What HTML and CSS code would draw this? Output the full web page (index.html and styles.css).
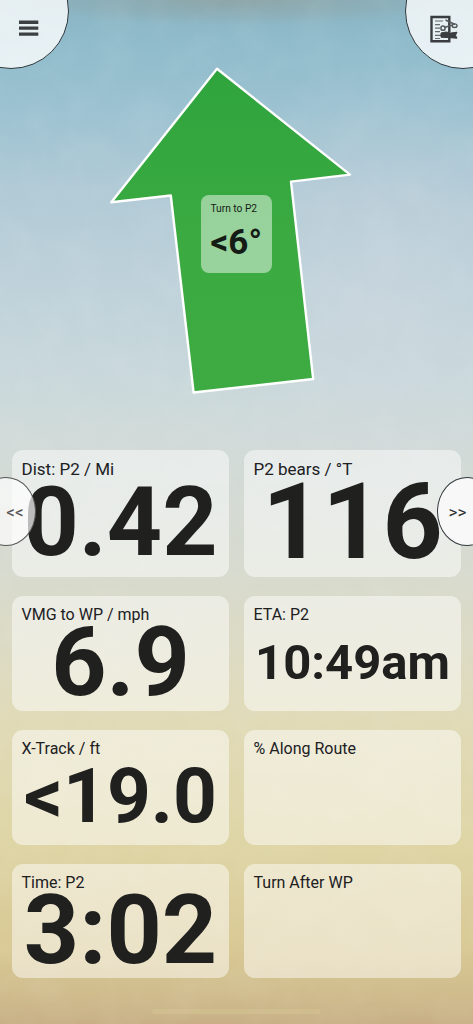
FILE: index.html
```
<!DOCTYPE html>
<html lang="en">
<head>
<meta charset="utf-8">
<title>Navigation</title>
<link rel="stylesheet" href="styles.css">
</head>
<body>
<div class="screen">
  <svg class="texture" width="473" height="1024" aria-hidden="true">
    <filter id="grain" x="0" y="0" width="100%" height="100%" color-interpolation-filters="sRGB">
      <feTurbulence type="fractalNoise" baseFrequency="0.03" numOctaves="4" seed="4"/>
      <feColorMatrix values="0 0 0 0 1  0 0 0 0 1  0 0 0 0 1  1.6 0 0 0 -0.6"/>
    </filter>
    <rect width="473" height="1024" filter="url(#grain)"/>
  </svg>

  <section class="heading">
    <svg class="arrow" viewBox="0 0 473 450" width="473" height="450">
      <defs><linearGradient id="green" x1="0" y1="0" x2="0" y2="1"><stop offset="0" stop-color="#2fa43d"/><stop offset=".5" stop-color="#3aaa41"/><stop offset="1" stop-color="#3dab42"/></linearGradient></defs>
      <path d="M217 68.7 350 174.6 291 181.6 313.2 379 193.6 392.5 170.8 195.5 111.3 202.3Z" fill="url(#green)" stroke="#fff" stroke-width="2.4" stroke-linejoin="round"/>
    </svg>
    <div class="turn"><span class="turn-label">Turn to P2</span><b class="turn-value">&lt;6°</b></div>
  </section>

  <main class="grid">
    <article class="card tall"><h2 class="label">Dist: P2 / Mi</h2><b class="value s96">0.42</b></article>
    <article class="card tall"><h2 class="label">P2 bears / °T</h2><b class="value s105">116</b></article>
    <article class="card"><h2 class="label">VMG to WP / mph</h2><b class="value s96">6.9</b></article>
    <article class="card"><h2 class="label">ETA: P2</h2><b class="value s49">10:49am</b></article>
    <article class="card"><h2 class="label">X-Track / ft</h2><b class="value s76">&lt;19.0</b></article>
    <article class="card"><h2 class="label">% Along Route</h2></article>
    <article class="card"><h2 class="label">Time: P2</h2><b class="value s96">3:02</b></article>
    <article class="card"><h2 class="label">Turn After WP</h2></article>
  </main>

  <button class="corner menu" aria-label="Menu">
    <svg width="20" height="16" viewBox="0 0 20 16"><path d="M0 2.2h19.3M0 8.1h19.3M0 14.1h19.3" stroke="#3d4042" stroke-width="3.4"/></svg>
  </button>
  <button class="corner route" aria-label="Route">
    <svg width="28" height="28" viewBox="0 0 28 28" fill="none" stroke="#3a3d3f">
      <path d="M19.3 17V2H1.5v24.3h17.8V21" stroke-width="2.4"/>
      <path d="M5 6h8M5 9.7h5M5 13.2h5M5 16.7h5M5 20.4h6M5 23.5h5" stroke-width="1.2" stroke="#66696b"/>
      <path d="M15.5 5 25 9.5M14 12.5l9-2.5" stroke-width="1.7" stroke="#55595b"/>
      <ellipse cx="24.6" cy="10.7" rx="2.4" ry="1.8" stroke-width="1.4" stroke="#55595b"/>
      <circle cx="13" cy="13.2" r="2.1" stroke-width="1.5" stroke="#55595b"/>
      <path d="M11 18 16 17l5 1 6-.8-1.5 3 1.5 3-7-.5-9-.5z" fill="#3a3d3f" stroke-width="1"/>
    </svg>
  </button>
  <button class="side prev">&lt;&lt;</button>
  <button class="side next">&gt;&gt;</button>
  <div class="home"></div>
</div>
</body>
</html>
```
FILE: styles.css
```
* { box-sizing: border-box; }
body { margin: 0; font-family: Roboto, "Liberation Sans", sans-serif; color: #20201f; }
.screen {
  position: relative;
  width: 473px;
  height: 1024px;
  overflow: hidden;
  background:
    radial-gradient(ellipse 220px 26px at 50% 0, rgba(143, 160, 158, .7), transparent),
    radial-gradient(ellipse 180px 240px at 80% 29%, rgba(210, 217, 225, .4), transparent),
    linear-gradient(#8ab3c1 0, #8fbbcb 40px, #9ac1d0 100px, #b1cad6 190px, #bfd2da 290px, #c9d8db 380px, #d1dad8 440px, #d6dacf 560px, #dcdac3 650px, #e0dab7 720px, #ded4a4 850px, #d8c894 950px, #cfbc8d 995px, #c8af86 1024px);
}
.texture { position: absolute; inset: 0; opacity: .07; }
.heading { position: relative; height: 450px; }
.arrow { display: block; }
.turn {
  position: absolute;
  left: 201px;
  top: 195px;
  width: 71px;
  height: 78px;
  padding: 8px 0 0 9.5px;
  border-radius: 8px;
  background: rgba(255, 255, 255, .48);
  color: #141c15;
}
.turn-label { display: block; font-size: 10.2px; line-height: 12px; white-space: nowrap; }
.turn-value { display: block; margin-top: 7px; font-size: 35px; line-height: 41px; white-space: nowrap; }
.grid {
  position: relative;
  display: grid;
  grid-template-columns: 217px 217px;
  grid-template-rows: 127px 114.7px 114.7px 114.5px;
  column-gap: 15px;
  row-gap: 19.2px;
  padding-left: 12px;
}
.card {
  display: grid;
  grid-template: 100% / 100%;
  border-radius: 11px;
  background: rgba(255, 255, 255, .48);
}
.label {
  grid-area: 1 / 1;
  margin: 9px 0 0 9.5px;
  font-size: 16px;
  font-weight: 400;
  line-height: 19px;
}
.tall .label { font-size: 17px; margin-top: 10px; }
.value {
  grid-area: 1 / 1;
  align-self: center;
  justify-self: center;
  margin-top: 18px;
  line-height: 1;
  white-space: nowrap;
}
.s105 { font-size: 105px; }
.s96 { font-size: 96.5px; }
.s76 { font-size: 76.5px; }
.s49 { font-size: 49px; }
.corner, .side {
  position: absolute;
  padding: 0;
  border: 1px solid #30383c;
  border-radius: 50%;
  font: inherit;
  color: #303030;
}
.corner { top: -47.5px; width: 116px; height: 116px; background: rgba(255, 255, 255, .78); }
.menu { left: -47.5px; }
.route { left: 404.5px; }
.corner svg { position: absolute; }
.menu svg { left: 65.5px; top: 66.5px; }
.route svg { left: 24.5px; top: 61px; }
.side { top: 477.4px; width: 60px; height: 68.6px; font-size: 17px; }
.prev { left: -24.5px; padding-left: 19px; background: rgba(255, 255, 255, .7); color: #555; border-color: #555; }
.next { left: 436.5px; padding-right: 18px; background: #f8f8f8; }
.home { position: absolute; left: 152px; top: 1009px; width: 169px; height: 5px; border-radius: 3px; background: rgba(214, 200, 148, .45); }
```
